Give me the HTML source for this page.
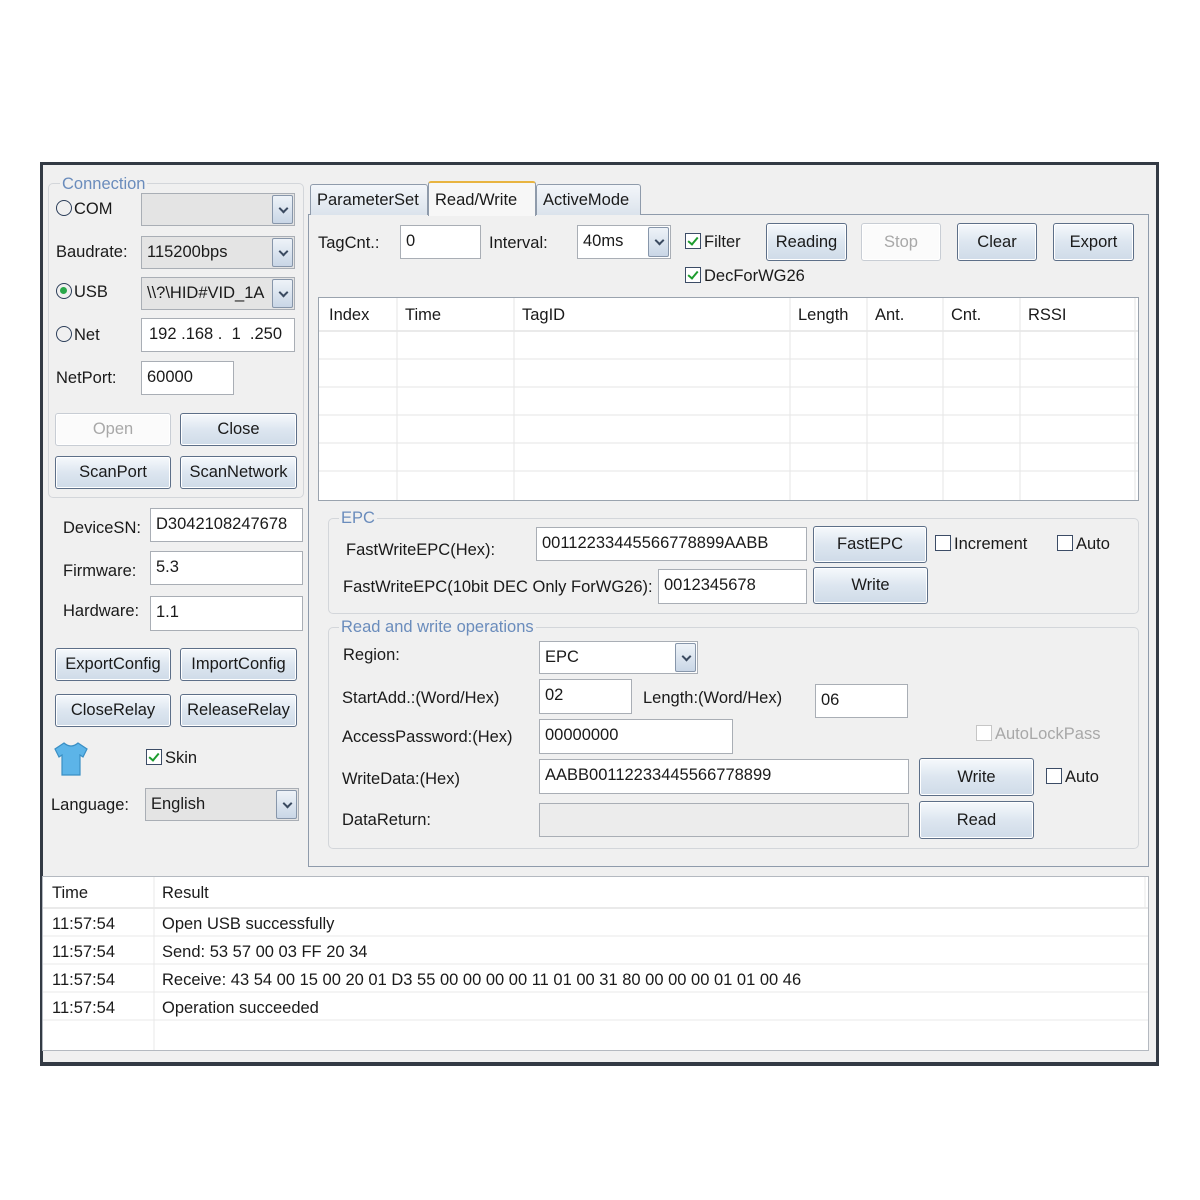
<!DOCTYPE html>
<html><head><meta charset="utf-8"><style>
*{box-sizing:border-box;margin:0;padding:0}
body{width:1200px;height:1200px;background:#fff;font-family:"Liberation Sans","DejaVu Sans",sans-serif;font-size:16.5px;color:#1a1a1a;position:relative;overflow:hidden}
.a{position:absolute}
.win{left:40px;top:162px;width:1119px;height:904px;background:#f0f0f0;border:3px solid #333a44;border-bottom-width:4px}
.t{position:absolute;white-space:nowrap;line-height:20px}
.b{position:absolute;border:1px solid #5d6f88;border-radius:3px;background:linear-gradient(#f6f9fc,#dde6f0 50%,#cfdbe8);text-align:center;box-shadow:inset 0 0 0 1px #fff}
.b.d{border-color:#c8cdd4;background:#fbfbfb;color:#a8a8a8}
.i{position:absolute;border:1px solid #a9aeb5;background:#fff;padding:5px 5px 3px;line-height:20px;white-space:nowrap;overflow:hidden}
.dd{position:absolute;border:1px solid #a9aeb5;background:#e4e4e4;padding:5px 5px 3px;line-height:20px;white-space:nowrap;overflow:hidden}
.dd:after{content:"";position:absolute;right:1px;top:1px;bottom:1px;width:19px;border:1px solid #8796aa;border-radius:2px;background:linear-gradient(#eef3f8,#c9d6e6)}
.dd:before{content:"";position:absolute;right:7px;top:50%;margin-top:-5px;width:5px;height:5px;border-right:2px solid #3a4a60;border-bottom:2px solid #3a4a60;transform:rotate(45deg);z-index:2}
.g{position:absolute;border:1px solid #d3d6da;border-radius:5px}
.gl{position:absolute;background:#f0f0f0;color:#6a8cbc;padding:0 2px;line-height:18px}
.r{display:inline-block;width:16px;height:16px;border:1.5px solid #2d3f5a;border-radius:50%;vertical-align:-2px;margin-right:2px;position:relative}
.r.on:after{content:"";position:absolute;left:3px;top:3px;width:7px;height:7px;border-radius:50%;background:#2aa84a}
.c{display:inline-block;width:16px;height:16px;border:1px solid #3c4c66;background:#fff;vertical-align:-2px;margin-right:3px;position:relative}
.c.k:after{content:"";position:absolute;left:4px;top:1px;width:4px;height:8px;border-right:2px solid #1d9c2e;border-bottom:2px solid #1d9c2e;transform:rotate(40deg)}
.c.dis{border-color:#c6c6c6}
.tab{position:absolute;top:184px;height:31px;border:1px solid #8f9bab;border-bottom:none;background:linear-gradient(#f3f6fa,#dbe3ec);padding:6px 6px 0;border-radius:3px 3px 0 0}
</style></head><body>
<div class="a win"></div>

<div class="g" style="left:48px;top:183px;width:256px;height:315px"></div>
<div class="gl" style="left:60px;top:175px">Connection</div>
<div class="t" style="left:56px;top:199px"><span class="r"></span>COM</div>
<div class="dd" style="left:141px;top:193px;width:154px;height:33px"></div>
<div class="t" style="left:56px;top:242px">Baudrate:</div>
<div class="dd" style="left:141px;top:236px;width:154px;height:33px">115200bps</div>
<div class="t" style="left:56px;top:282px"><span class="r on"></span>USB</div>
<div class="dd" style="left:141px;top:277px;width:154px;height:33px">\\?\HID#VID_1A</div>
<div class="t" style="left:56px;top:325px"><span class="r"></span>Net</div>
<div class="i" style="left:141px;top:318px;width:154px;height:34px;padding-left:7px">192 .168 .&nbsp; 1 &nbsp;.250</div>
<div class="t" style="left:56px;top:368px">NetPort:</div>
<div class="i" style="left:141px;top:361px;width:93px;height:34px">60000</div>
<div class="b d" style="left:55px;top:413px;width:116px;height:33px;line-height:31px">Open</div>
<div class="b" style="left:180px;top:413px;width:117px;height:33px;line-height:31px">Close</div>
<div class="b" style="left:55px;top:456px;width:116px;height:33px;line-height:31px">ScanPort</div>
<div class="b" style="left:180px;top:456px;width:117px;height:33px;line-height:31px">ScanNetwork</div>

<div class="t" style="left:63px;top:518px">DeviceSN:</div>
<div class="i" style="left:150px;top:508px;width:153px;height:34px">D3042108247678</div>
<div class="t" style="left:63px;top:561px">Firmware:</div>
<div class="i" style="left:150px;top:551px;width:153px;height:34px">5.3</div>
<div class="t" style="left:63px;top:601px">Hardware:</div>
<div class="i" style="left:150px;top:596px;width:153px;height:35px">1.1</div>
<div class="b" style="left:55px;top:648px;width:116px;height:33px;line-height:31px">ExportConfig</div>
<div class="b" style="left:180px;top:648px;width:117px;height:33px;line-height:31px">ImportConfig</div>
<div class="b" style="left:55px;top:694px;width:116px;height:33px;line-height:31px">CloseRelay</div>
<div class="b" style="left:180px;top:694px;width:117px;height:33px;line-height:31px">ReleaseRelay</div>
<svg class="a" style="left:52px;top:740px" width="38" height="38" viewBox="0 0 38 38"><path d="M12 3 L3 9 L7 17 L10 15 L10 35 L28 35 L28 15 L31 17 L35 9 L26 3 Q19 9 12 3Z" fill="#5cb4e8" stroke="#3a8fc4" stroke-width="1.2"/></svg>
<div class="t" style="left:146px;top:748px"><span class="c k"></span>Skin</div>
<div class="t" style="left:51px;top:795px">Language:</div>
<div class="dd" style="left:145px;top:788px;width:154px;height:33px">English</div>

<div class="a" style="left:308px;top:214px;width:841px;height:653px;border:1px solid #8f9bab;background:#f0f0f0"></div>
<div class="tab" style="left:310px;width:118px">ParameterSet</div>
<div class="tab" style="left:536px;width:105px">ActiveMode</div>
<div class="tab" style="left:428px;top:181px;height:35px;width:108px;background:#f7f7f7;border-top:2px solid #e8b440;padding-top:8px">Read/Write</div>

<div class="t" style="left:318px;top:233px">TagCnt.:</div>
<div class="i" style="left:400px;top:225px;width:81px;height:34px">0</div>
<div class="t" style="left:489px;top:233px">Interval:</div>
<div class="dd" style="left:577px;top:225px;width:94px;height:34px;background:#fff">40ms</div>
<div class="t" style="left:685px;top:232px"><span class="c k"></span>Filter</div>
<div class="t" style="left:685px;top:266px"><span class="c k"></span>DecForWG26</div>
<div class="b" style="left:766px;top:223px;width:81px;height:38px;line-height:36px">Reading</div>
<div class="b d" style="left:861px;top:223px;width:80px;height:38px;line-height:36px">Stop</div>
<div class="b" style="left:957px;top:223px;width:80px;height:38px;line-height:36px">Clear</div>
<div class="b" style="left:1053px;top:223px;width:81px;height:38px;line-height:36px">Export</div>

<div class="a" style="left:318px;top:297px;width:821px;height:204px;border:1px solid #9aa3ae;background:#fff"></div>
<svg class="a" style="left:319px;top:298px" width="819" height="202">
<g stroke="#e6e6e6" stroke-width="1">
<line x1="0" y1="33" x2="819" y2="33" stroke="#d6d6d6"/>
<line x1="0" y1="61" x2="819" y2="61"/><line x1="0" y1="89" x2="819" y2="89"/><line x1="0" y1="117" x2="819" y2="117"/><line x1="0" y1="145" x2="819" y2="145"/><line x1="0" y1="173" x2="819" y2="173"/>
<line x1="78" y1="0" x2="78" y2="202"/><line x1="195" y1="0" x2="195" y2="202"/><line x1="471" y1="0" x2="471" y2="202"/><line x1="548" y1="0" x2="548" y2="202"/><line x1="624" y1="0" x2="624" y2="202"/><line x1="701" y1="0" x2="701" y2="202"/><line x1="816" y1="0" x2="816" y2="202"/>
</g></svg>
<div class="t" style="left:329px;top:305px">Index</div>
<div class="t" style="left:405px;top:305px">Time</div>
<div class="t" style="left:522px;top:305px">TagID</div>
<div class="t" style="left:798px;top:305px">Length</div>
<div class="t" style="left:875px;top:305px">Ant.</div>
<div class="t" style="left:951px;top:305px">Cnt.</div>
<div class="t" style="left:1028px;top:305px">RSSI</div>

<div class="g" style="left:328px;top:518px;width:811px;height:96px"></div>
<div class="gl" style="left:339px;top:509px">EPC</div>
<div class="t" style="left:346px;top:540px">FastWriteEPC(Hex):</div>
<div class="i" style="left:536px;top:527px;width:271px;height:34px">00112233445566778899AABB</div>
<div class="b" style="left:813px;top:526px;width:114px;height:37px;line-height:35px">FastEPC</div>
<div class="t" style="left:935px;top:534px"><span class="c"></span>Increment</div>
<div class="t" style="left:1057px;top:534px"><span class="c"></span>Auto</div>
<div class="t" style="left:343px;top:577px">FastWriteEPC(10bit DEC Only ForWG26):</div>
<div class="i" style="left:658px;top:569px;width:149px;height:35px">0012345678</div>
<div class="b" style="left:813px;top:567px;width:115px;height:37px;line-height:35px">Write</div>

<div class="g" style="left:328px;top:627px;width:811px;height:222px"></div>
<div class="gl" style="left:339px;top:618px">Read and write operations</div>
<div class="t" style="left:343px;top:645px">Region:</div>
<div class="dd" style="left:539px;top:641px;width:159px;height:33px;background:#fff">EPC</div>
<div class="t" style="left:342px;top:688px">StartAdd.:(Word/Hex)</div>
<div class="i" style="left:539px;top:679px;width:93px;height:35px">02</div>
<div class="t" style="left:643px;top:688px">Length:(Word/Hex)</div>
<div class="i" style="left:815px;top:684px;width:93px;height:34px">06</div>
<div class="t" style="left:342px;top:727px">AccessPassword:(Hex)</div>
<div class="i" style="left:539px;top:719px;width:194px;height:35px">00000000</div>
<div class="t" style="left:976px;top:724px;color:#a8a8a8"><span class="c dis"></span>AutoLockPass</div>
<div class="t" style="left:342px;top:769px">WriteData:(Hex)</div>
<div class="i" style="left:539px;top:759px;width:370px;height:35px">AABB00112233445566778899</div>
<div class="b" style="left:919px;top:758px;width:115px;height:38px;line-height:36px">Write</div>
<div class="t" style="left:1046px;top:767px"><span class="c"></span>Auto</div>
<div class="t" style="left:342px;top:810px">DataReturn:</div>
<div class="i" style="left:539px;top:803px;width:370px;height:34px;background:#ececec"></div>
<div class="b" style="left:919px;top:801px;width:115px;height:38px;line-height:36px">Read</div>

<div class="a" style="left:42px;top:876px;width:1107px;height:175px;border:1px solid #b4b9c0;background:#fff"></div>
<svg class="a" style="left:43px;top:877px" width="1105" height="173">
<g stroke="#e8e8e8"><line x1="0" y1="31" x2="1105" y2="31" stroke="#d6d6d6"/><line x1="0" y1="59" x2="1105" y2="59"/><line x1="0" y1="87" x2="1105" y2="87"/><line x1="0" y1="115" x2="1105" y2="115"/><line x1="0" y1="143" x2="1105" y2="143"/><line x1="111" y1="0" x2="111" y2="173"/><line x1="1102" y1="0" x2="1102" y2="31"/></g></svg>
<div class="t" style="left:52px;top:883px">Time</div>
<div class="t" style="left:162px;top:883px">Result</div>
<div class="t" style="left:52px;top:914px">11:57:54</div><div class="t" style="left:162px;top:914px">Open USB successfully</div>
<div class="t" style="left:52px;top:942px">11:57:54</div><div class="t" style="left:162px;top:942px">Send: 53 57 00 03 FF 20 34</div>
<div class="t" style="left:52px;top:970px">11:57:54</div><div class="t" style="left:162px;top:970px">Receive: 43 54 00 15 00 20 01 D3 55 00 00 00 00 11 01 00 31 80 00 00 00 01 01 00 46</div>
<div class="t" style="left:52px;top:998px">11:57:54</div><div class="t" style="left:162px;top:998px">Operation succeeded</div>
</body></html>
